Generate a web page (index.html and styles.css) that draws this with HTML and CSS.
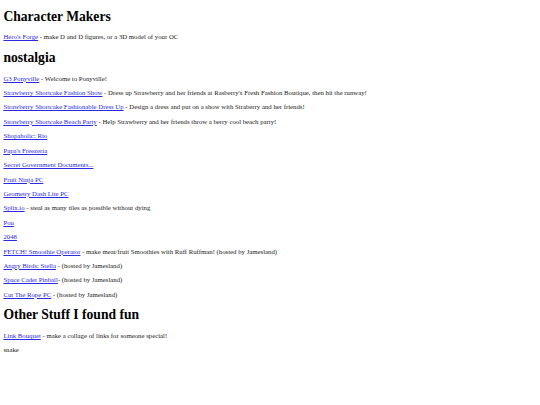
FILE: index.html
```html
<!DOCTYPE html>
<html>
<head>
<meta charset="utf-8">
<link rel="stylesheet" href="styles.css">
</head>
<body>
<h1 class="first">Character Makers</h1>
<p><a href="#">Hero's Forge</a> - make D and D figures, or a 3D model of your OC</p>
<h1>nostalgia</h1>
<p><a href="#">G3 Ponyville</a> - Welcome to Ponyville!</p>
<p><a href="#">Strawberry Shortcake Fashion Show</a> - Dress up Strawberry and her friends at Rasberry's Fresh Fashion Boutique, then hit the runway!</p>
<p><a href="#">Strawberry Shortcake Fashionable Dress Up</a> - Design a dress and put on a show with Straberry and her friends!</p>
<p><a href="#">Strawberry Shortcake Beach Party</a> - Help Strawberry and her friends throw a berry cool beach party!</p>
<p><a href="#">Shopaholic: Rio</a></p>
<p><a href="#">Papa's Freezeria</a></p>
<p><a href="#">Secret Government Documents...</a></p>
<p><a href="#">Fruit Ninja PC</a></p>
<p><a href="#">Geometry Dash Lite PC</a></p>
<p><a href="#">Splix.io</a> - steal as many tiles as possible without dying</p>
<p><a href="#">Pou</a></p>
<p><a href="#">2048</a></p>
<p><a href="#">FETCH! Smoothie Operator</a> - make meat/fruit Smoothies with Ruff Ruffman! (hosted by Jamesland)</p>
<p><a href="#">Angry Birds: Stella</a> - (hosted by Jamesland)</p>
<p><a href="#">Space Cadet Pinball</a>- (hosted by Jamesland)</p>
<p><a href="#">Cut The Rope PC</a> - (hosted by Jamesland)</p>
<h1>Other Stuff I found fun</h1>
<p><a href="#">Link Bouquet</a> - make a collage of links for someone special!</p>
<p>snake</p>
</body>
</html>
```
FILE: styles.css
```css
html {
  background: #ffffff;
}
body {
  margin: 3.375px;
  font-family: "Liberation Serif", "Times New Roman", Times, serif;
  font-size: 6.78px;
  line-height: 7.65px;
  color: #1a1a1a;
}
h1 {
  font-size: 13.6px;
  line-height: 15.5px;
  margin: 9.05px 0;
  font-weight: bold;
  color: #000000;
}
h1.first {
  margin-top: 5.5px;
}
p {
  margin: 6.75px 0;
}
a {
  color: #2a2ae0;
}
```
